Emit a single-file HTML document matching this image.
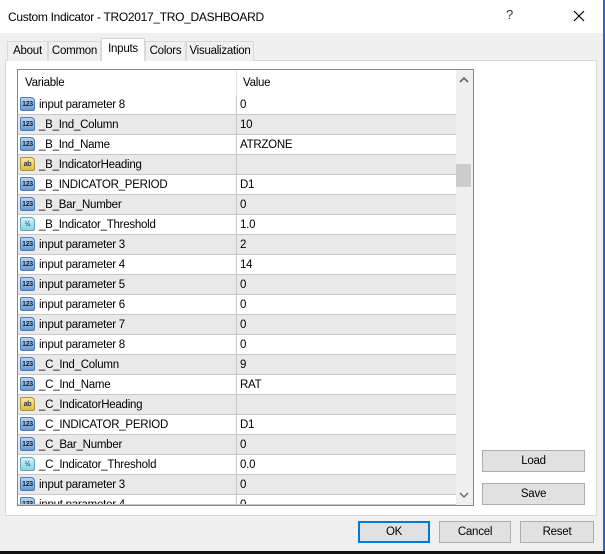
<!DOCTYPE html>
<html><head><style>
*{margin:0;padding:0;box-sizing:border-box}
body{width:605px;height:554px;position:relative;background:#f0f0f0;font-family:"Liberation Sans",sans-serif;font-size:11.5px;letter-spacing:-0.25px;color:#000;overflow:hidden}
.a{position:absolute}
.title{left:0;top:0;width:603px;height:33px;background:#fff}
.tab{position:absolute;top:41px;height:20px;border:1px solid #d9d9d9;border-bottom:none;background:#f0f0f0;text-align:center;line-height:19px}
.btn{position:absolute;background:#e1e1e1;border:1px solid #adadad;text-align:center;line-height:21px}
.row{position:absolute;left:18px;width:438px;height:20px;border-bottom:1px solid #c8c8c8}
.row .n{position:absolute;left:21px;top:4px}
.row .v{position:absolute;left:222px;top:4px}
.row .d{position:absolute;left:218px;top:0;width:1px;height:20px;background:#c8c8c8}
.ic{position:absolute;left:2px;top:2px;width:15px;height:14px;border-radius:2px 4px 2px 2px;font-size:7px;font-weight:bold;line-height:14px;text-align:center;letter-spacing:-0.3px}
.i1{background:linear-gradient(#b8d4f0,#6a9ad0);color:#123;border:1px solid #4a7ab8}
.i2{background:linear-gradient(#f6e9a8,#d8bc50);color:#333;border:1px solid #b09030}
.i3{background:linear-gradient(#d8f2f8,#8ccfe0);color:#157;border:1px solid #5aa8c0}
.g{background:#e9e9e9}.w{background:#fff}
</style></head><body>
<div class="a title"></div>
<div class="a" style="left:8px;top:10px;font-size:12px;letter-spacing:-0.3px">Custom Indicator - TRO2017_TRO_DASHBOARD</div>
<div class="a" style="left:506px;top:7px;font-size:13px;color:#333">?</div>
<svg class="a" style="left:573px;top:10px" width="12" height="12"><path d="M1 1L11 11M11 1L1 11" stroke="#000" stroke-width="1.2"/></svg>
<div class="a" style="left:603px;top:0;width:2px;height:554px;background:#1a6fc4"></div>
<div class="a" style="left:0;top:551px;width:605px;height:3px;background:#111"></div>

<div class="a" style="left:5px;top:60px;width:592px;height:456px;background:#fff;border:1px solid #d9d9d9"></div>
<div class="tab" style="left:7px;width:41px">About</div>
<div class="tab" style="left:48px;width:53px">Common</div>
<div class="tab" style="left:101px;width:44px;top:38px;height:23px;background:#fff;line-height:21px">Inputs</div>
<div class="tab" style="left:145px;width:41px">Colors</div>
<div class="tab" style="left:186px;width:68px">Visualization</div>

<div class="a" style="left:17px;top:69px;width:457px;height:437px;border:1px solid #828790;background:#fff;overflow:hidden">
</div>
<div class="a" style="left:18px;top:70px;width:438px;height:435px;overflow:hidden">
<div class="a" style="left:7px;top:7px">Variable</div>
<div class="a" style="left:218px;top:0;width:1px;height:24px;background:#e5e5e5"></div>
<div class="a" style="left:225px;top:7px">Value</div>
</div>
<div id="rows"></div>
<div class="a" style="left:456px;top:70px;width:17px;height:435px;background:#f0f0f0"></div>
<svg class="a" style="left:459px;top:76px" width="10" height="7"><path d="M1 6L5 2L9 6" stroke="#606060" stroke-width="1.6" fill="none"/></svg>
<svg class="a" style="left:459px;top:492px" width="10" height="7"><path d="M1 1L5 5L9 1" stroke="#606060" stroke-width="1.3" fill="none"/></svg>
<div class="a" style="left:456px;top:164px;width:15px;height:23px;background:#cdcdcd"></div>

<div class="btn" style="left:482px;top:450px;width:103px;height:22px">Load</div>
<div class="btn" style="left:482px;top:483px;width:103px;height:22px">Save</div>
<div class="btn" style="left:358px;top:521px;width:72px;height:22px;border:2px solid #0078d7;line-height:19px">OK</div>
<div class="btn" style="left:439px;top:521px;width:72px;height:22px">Cancel</div>
<div class="btn" style="left:520px;top:521px;width:74px;height:22px">Reset</div>

<script>
var d=[["input parameter 8","0",1],["_B_Ind_Column","10",1],["_B_Ind_Name","ATRZONE",1],["_B_IndicatorHeading","",2],["_B_INDICATOR_PERIOD","D1",1],["_B_Bar_Number","0",1],["_B_Indicator_Threshold","1.0",3],["input parameter 3","2",1],["input parameter 4","14",1],["input parameter 5","0",1],["input parameter 6","0",1],["input parameter 7","0",1],["input parameter 8","0",1],["_C_Ind_Column","9",1],["_C_Ind_Name","RAT",1],["_C_IndicatorHeading","",2],["_C_INDICATOR_PERIOD","D1",1],["_C_Bar_Number","0",1],["_C_Indicator_Threshold","0.0",3],["input parameter 3","0",1],["input parameter 4","0",1]];
var h="";d.forEach(function(r,i){var t=95+20*i;var hh=Math.min(20,505-t);var lbl=r[2]==2?"ab":r[2]==3?"½":"123";
h+='<div class="row '+(i%2?'g':'w')+'" style="top:'+t+'px;height:'+hh+'px;overflow:hidden"><div class="ic i'+r[2]+'">'+lbl+'</div><div class="n">'+r[0]+'</div><div class="d"></div><div class="v">'+r[1]+'</div></div>';});
document.getElementById("rows").innerHTML=h;
</script>
</body></html>
